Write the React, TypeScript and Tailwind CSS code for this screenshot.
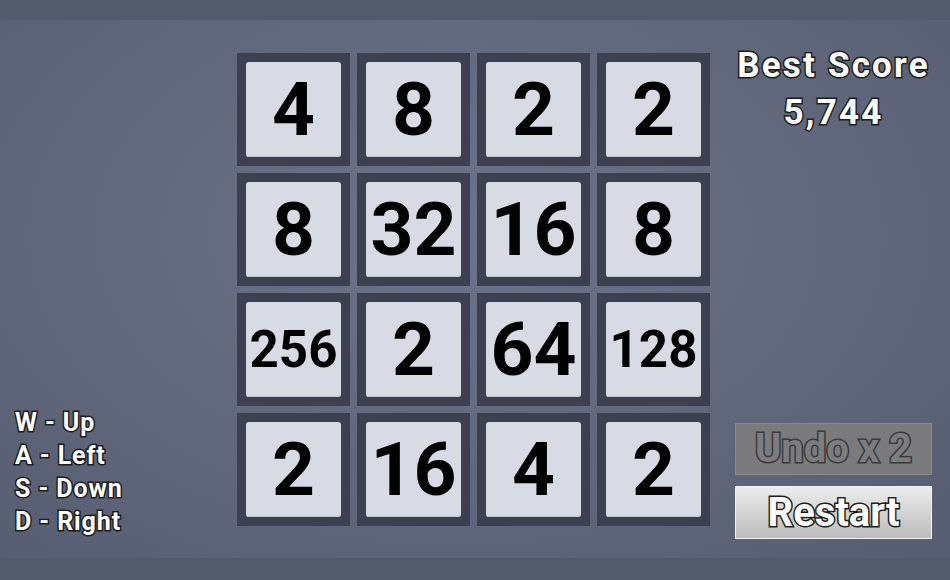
import React from 'react';

const board: number[][] = [
  [4, 8, 2, 2],
  [8, 32, 16, 8],
  [256, 2, 64, 128],
  [2, 16, 4, 2],
];

const controls = ['W - Up', 'A - Left', 'S - Down', 'D - Right'];

// white label with a dark outline drawn behind the fill
const outlined = '[-webkit-text-stroke:3px_#1c1c1f] [paint-order:stroke_fill]';

const Tile: React.FC<{ value: number }> = ({ value }) => {
  const size = value >= 100 ? 'text-[51px]' : 'text-[75px]';
  return (
    <div className="bg-[#3c4050] p-[9px]">
      <div className="flex h-[95px] items-center justify-center rounded-[3px] bg-[#d9dbe4] shadow-[inset_0_-1px_0_#c4c6cf]">
        <span className={`${size} font-bold leading-none text-black`}>{value}</span>
      </div>
    </div>
  );
};

const App: React.FC = () => {
  return (
    <div className="flex h-[580px] w-[950px] flex-col overflow-hidden bg-[#535a6c] font-['Roboto',sans-serif]">
      <div className="h-5 bg-[#535a6c]" />

      <div className="flex flex-1 bg-[radial-gradient(ellipse_at_48%_40%,#6d7388_0%,#646a7e_45%,#575d70_100%)]">
        {/* keyboard help */}
        <div className="flex w-[237px] flex-col justify-end pb-[20px] pl-[15px]">
          {controls.map((c) => (
            <div key={c} className={`text-[25px] font-bold leading-[33px] tracking-[0.9px] text-white ${outlined}`}>
              {c}
            </div>
          ))}
        </div>

        {/* board */}
        <div className="pt-[33px]">
          <div className="grid w-[473px] grid-cols-4 gap-[7px]">
            {board.flat().map((v, i) => (
              <Tile key={i} value={v} />
            ))}
          </div>
        </div>

        {/* score and buttons */}
        <div className="ml-[25px] flex w-[197px] flex-col justify-between pb-[19px] pt-[22px]">
          <div className={`text-center text-[35px] font-bold leading-[47px] tracking-[2.2px] text-white ${outlined}`}>
            <div>Best Score</div>
            <div>5,744</div>
          </div>

          <div className="flex flex-col gap-[11px]">
            <button className="flex h-[52px] items-center justify-center border border-[#8a8a8c] bg-[#7b7b7d]">
              <span className="text-[40px] font-bold leading-none text-[#7d7d7f] [-webkit-text-stroke:3px_#3a3a3c] [paint-order:stroke_fill]">
                Undo x 2
              </span>
            </button>
            <button className="flex h-[53px] items-center justify-center border border-[#f2f2f2] bg-gradient-to-b from-[#ececec] to-[#bdbdbd]">
              <span className={`text-[40px] font-bold leading-none text-white ${outlined}`}>Restart</span>
            </button>
          </div>
        </div>
      </div>

      <div className="h-[22px] bg-[#535a6c]" />
    </div>
  );
};

export default App;
